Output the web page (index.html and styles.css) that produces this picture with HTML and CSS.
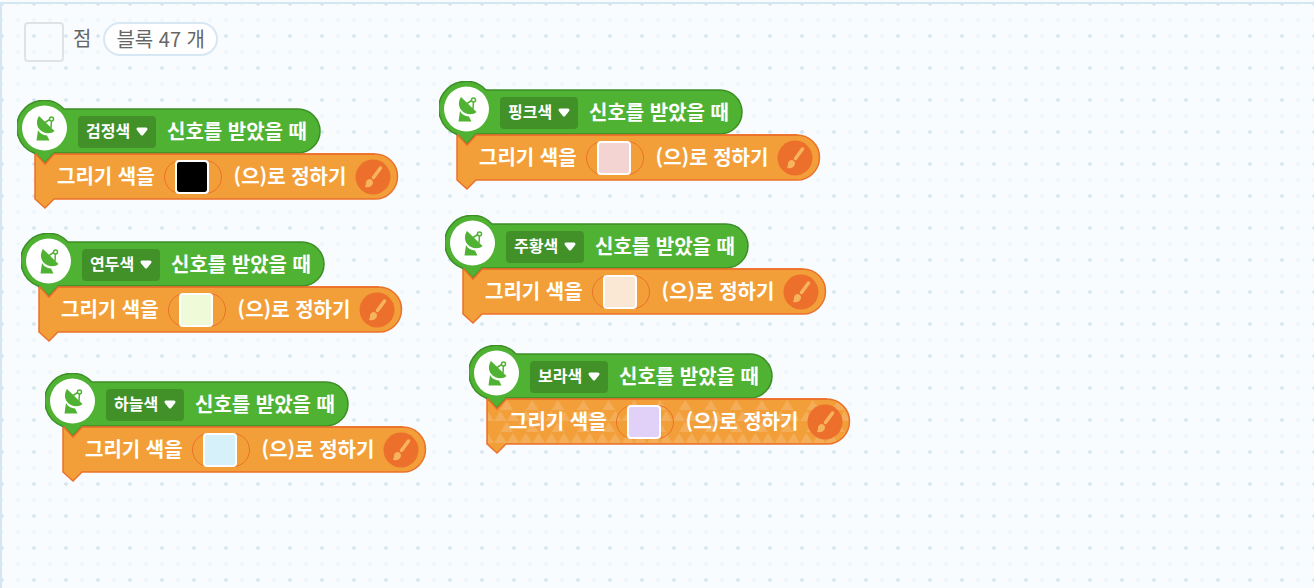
FILE: index.html
```html
<!DOCTYPE html>
<html lang="ko">
<head>
<meta charset="utf-8">
<title>블록 조립소</title>
<link rel="stylesheet" href="styles.css">
</head>
<body>
<svg class="defs" width="0" height="0" aria-hidden="true">
  <defs>
    <pattern id="triangles" width="25.5" height="44" patternUnits="userSpaceOnUse" x="25" y="55">
      <path d="M12.75 0L19 10H6.500ZM6.400 11L12.500 21H.2ZM19.100 11L25.300 21H13ZM12.750 22L19 32H6.500ZM6.400 33L12.500 43H.2ZM19.100 33L25.300 43H13Z" fill="#f4ae59"/>
    </pattern>
    <symbol id="hat" viewBox="0 0 384 110">
      <path d="M47 9H281A22 22 0 0 1 281 53H37L28 63L19 54L17 53A27.300 27.300 0 1 1 47 9Z" fill="#50b232" stroke="#3b8f25" stroke-width="1.5"/>
      <circle cx="27.500" cy="28" r="22.500" fill="#fff"/>
      <g fill="#50b232">
        <path d="M22 16C18 22 20 29 26 32C30 34 35 33.500 37.500 31Z"/>
        <path d="M21 30C23 34 26 35 30 35.500L32.500 40.500H19.500Z"/>
        <path d="M28 22.500L33.500 19M34.500 20L34 28" fill="none" stroke="#50b232" stroke-width="1.500"/>
        <circle cx="34.500" cy="19" r="2" fill="#fff" stroke="#50b232" stroke-width="1.500"/>
      </g>
    </symbol>
  </defs>
</svg>
<main class="board">
  <header class="summary">
    <span class="thumb"></span>
    <span class="name">점</span>
    <span class="count">블록 47 개</span>
  </header>
  <div id="stacks"></div>
</main>
<script src="blocks.js"></script>
</body>
</html>
```
FILE: styles.css
```css
* { box-sizing: border-box; }
body {
  margin: 0;
  padding-top: 2px;
  background: #f9fcff;
  font-family: "Noto Sans CJK KR", sans-serif;
}
.defs { position: absolute; }
.board {
  position: relative;
  min-height: calc(100vh - 2px);
  border-top: 2px solid #d5e6f3;
  border-left: 2px solid #d5e6f3;
  background:
    radial-gradient(circle, #d9e7f1 0 2px, transparent 2px) 16px -16px / 32px 32px,
    radial-gradient(circle, #eff7fd 0 2px, transparent 2px) 8px -8px / 16px 16px,
    #f9fcff;
}
.summary {
  display: flex;
  align-items: flex-start;
  padding: 18px 22px;
  color: #666;
  font-size: 20px;
  line-height: 30px;
}
.thumb {
  width: 40px;
  height: 40px;
  border: 2px solid #e0e2e4;
  border-radius: 4px;
}
.name { margin: 1px 12px 0 9px; }
.count {
  padding: 0 11px;
  border: 2px solid #d8e7f4;
  border-radius: 17px;
  background: #fff;
}
.stack {
  position: absolute;
  width: 384px;
  padding-top: 9px;
  color: #fff;
  font-size: 20px;
  font-weight: 700;
  line-height: 44px;
}
.shape {
  position: absolute;
  top: 0;
  left: 0;
  width: 384px;
  height: 110px;
}
.row {
  position: relative;
  display: flex;
  align-items: center;
  height: 45px;
  white-space: nowrap;
}
.label { padding-bottom: 2px; }
.hat { gap: 11px; padding-left: 61px; }
.command { padding: 0 10px 0 40px; }
.signal {
  display: flex;
  align-items: center;
  width: 78px;
  height: 32px;
  padding-left: 8px;
  border-radius: 4px;
  background: #419128;
}
.signal select {
  appearance: none;
  width: 48px;
  height: 28px;
  padding: 0 0 4px;
  border: 0;
  background: none;
  color: #fff;
  font: 700 16px/24px "Noto Sans CJK KR", sans-serif;
}
.signal svg { width: 16px; height: 12px; }
.slot {
  display: flex;
  align-items: center;
  width: 58px;
  height: 34px;
  margin: 0 12px 0 9px;
  padding-left: 10px;
  border: 1px solid #ec702b;
  border-radius: 17px;
}
.slot input {
  appearance: none;
  flex: none;
  width: 34px;
  height: 34px;
  padding: 0;
  border: 2px solid #fff;
  border-radius: 4px;
}
.slot input::-webkit-color-swatch-wrapper { padding: 0; }
.slot input::-webkit-color-swatch { border: 0; border-radius: 2px; }
.brush { width: 36px; height: 36px; margin-left: auto; }
```
FILE: blocks.js
```js
const stacks = [
  { name: "검정색", color: "#000000", x: 15, y: 96 },
  { name: "핑크색", color: "#f4d4d2", x: 437, y: 77 },
  { name: "연두색", color: "#effad8", x: 19, y: 229 },
  { name: "주황색", color: "#fae8d5", x: 443, y: 211 },
  { name: "하늘색", color: "#d7f1fb", x: 43, y: 369 },
  { name: "보라색", color: "#e1d0f7", x: 467, y: 341, textured: true }
];
const body = "M18 54H20L28 64L37 54H358A22.500 22.500 0 0 1 358 99H37L28 108L18 99Z";

document.getElementById("stacks").innerHTML = stacks.map(s => `
  <section class="stack" style="left:${s.x}px;top:${s.y}px">
    <svg class="shape" viewBox="0 0 384 110" aria-hidden="true">
      <path d="${body}" fill="#f29f39" stroke="#ec702b" stroke-width="1.500"/>
      ${s.textured ? `<path d="M19 55H358A21.500 21.500 0 0 1 358 98H19Z" fill="url(#triangles)"/>` : ""}
      <use href="#hat" width="384" height="110"/>
      <path d="M18 54H19L28 64L37 54H358" fill="none" stroke="#ec702b" stroke-width="1.500"/>
    </svg>
    <div class="row hat">
      <span class="signal">
        <select aria-label="신호">${stacks.map(o => `<option${o === s ? " selected" : ""}>${o.name}</option>`).join("")}</select>
        <svg viewBox="0 0 16 12" aria-hidden="true"><path d="M4 3H12L8 8Z" fill="#fff" stroke="#fff" stroke-width="3" stroke-linejoin="round"/></svg>
      </span>
      <span class="label">신호를 받았을 때</span>
    </div>
    <div class="row command">
      <span class="label">그리기 색을</span>
      <span class="slot"><input type="color" aria-label="그리기 색" value="${s.color}"></span>
      <span class="label">(으)로 정하기</span>
      <svg class="brush" viewBox="0 0 36 36" aria-hidden="true">
        <circle cx="18" cy="18" r="17.500" fill="#ec702b"/>
        <path d="M25.500 9L18.500 18.500" stroke="#f7b45c" stroke-width="3.500" stroke-linecap="round"/>
        <path d="M14 20Q18 20 18 24Q17 29 10 28Q11 26 11 24Q11 21 14 20Z" fill="#f7b45c"/>
      </svg>
    </div>
  </section>`).join("");
```
